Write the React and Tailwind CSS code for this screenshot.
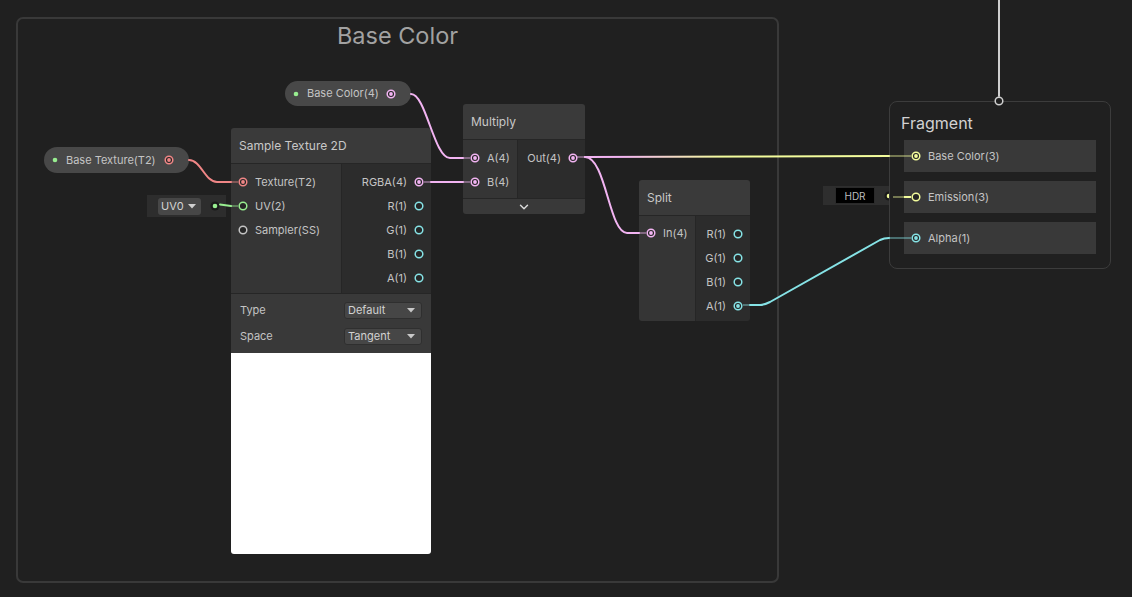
import { ChevronDown } from "lucide-react";

const C = {
  red: "#f08686",
  pink: "#f2b4f2",
  cyan: "#86e3e6",
  yellow: "#f3fc9c",
  green: "#98ee90",
  grey: "#c4c4c4",
};

const label = "font-['Inter','Noto_Sans',sans-serif] text-[11px] text-[#c4c4c4] leading-none whitespace-nowrap";

function Port({ color, filled }) {
  return (
    <svg width="10" height="10" viewBox="0 0 10 10" className="shrink-0">
      <circle cx="5" cy="5" r="3.8" fill="#262626" stroke={color} strokeWidth="1.5" />
      {filled && <circle cx="5" cy="5" r="1.9" fill={color} />}
    </svg>
  );
}

function Dot({ color, ring }) {
  return (
    <svg width="10" height="10" viewBox="0 0 10 10" className="shrink-0">
      {ring && <circle cx="5" cy="5" r="4.5" fill="#1a1a1a" />}
      <circle cx="5" cy="5" r="2.3" fill={color} />
    </svg>
  );
}

function InRow({ text, color, filled }) {
  return (
    <div className="flex h-6 items-center gap-[7px] pl-[7px]">
      <Port color={color} filled={filled} />
      <span className={label}>{text}</span>
    </div>
  );
}

function OutRow({ text, color, filled }) {
  return (
    <div className="flex h-6 items-center justify-end gap-[7px] pr-[7px]">
      <span className={label}>{text}</span>
      <Port color={color} filled={filled} />
    </div>
  );
}

function Header({ title }) {
  return (
    <div className="flex h-9 items-center border-b border-[#262626] bg-[#3a3a3a] px-2">
      <span className="font-['Inter','Noto_Sans',sans-serif] text-[12px] text-[#c8c8c8]">{title}</span>
    </div>
  );
}

function Select({ value }) {
  return (
    <div className="flex h-[17px] w-[78px] items-center justify-between rounded-[3px] border border-[#2f2f2f] bg-[#464646] pl-[3px] pr-[6px]">
      <span className={label + " text-[#d2d2d2]"}>{value}</span>
      <svg width="8" height="5" viewBox="0 0 8 5">
        <polygon points="0,0 8,0 4,4.5" fill="#c8c8c8" />
      </svg>
    </div>
  );
}

function Pill({ text, color, className }) {
  return (
    <div className={"absolute flex items-center rounded-full bg-[#484848] pl-[6px] pr-[15px] " + className}>
      <Dot color={C.green} />
      <span className={label + " ml-[6px] flex-1"}>{text}</span>
      <Port color={color} filled />
    </div>
  );
}

function Slot({ text, color, filled }) {
  return (
    <div className="flex h-8 items-center gap-[7px] bg-[#393939] pl-[7px]">
      <Port color={color} filled={filled} />
      <span className={label}>{text}</span>
    </div>
  );
}

export default function App() {
  return (
    <div className="relative h-[597px] w-[1132px] overflow-hidden bg-[#202020] font-['Inter','Noto_Sans',sans-serif]">
      {/* group */}
      <div className="absolute left-[16px] top-[17px] h-[566px] w-[763px] rounded-[7px] border-2 border-[#393939]">
        <div className="pt-[2px] text-center text-[23.5px] leading-[30px] text-[#a2a2a2]">Base Color</div>
      </div>

      {/* properties */}
      <Pill text="Base Texture(T2)" color={C.red} className="left-[44px] top-[147px] h-[26px] w-[145px]" />
      <Pill text="Base Color(4)" color={C.pink} className="left-[285px] top-[81px] h-[25px] w-[126px]" />

      {/* UV widget */}
      <div className="absolute left-[147px] top-[195px] flex h-[22px] w-[79px] items-center bg-[#2d2d2d] pl-[11px] pr-[6px]">
        <div className="flex h-[17px] w-[43px] items-center justify-between rounded-[3px] bg-[#474747] pl-[3px] pr-[5px]">
          <span className={label + " text-[#d4d4d4]"}>UV0</span>
          <svg width="8" height="5" viewBox="0 0 8 5">
            <polygon points="0,0 8,0 4,4.5" fill="#d0d0d0" />
          </svg>
        </div>
        <div className="ml-auto">
          <Dot color={C.green} ring />
        </div>
      </div>

      {/* Sample Texture 2D */}
      <div className="absolute left-[231px] top-[128px] w-[200px] overflow-hidden rounded-[3px]">
        <Header title="Sample Texture 2D" />
        <div className="flex">
          <div className="w-[111px] border-r border-[#262626] bg-[#353535] pt-[6px]">
            <InRow text="Texture(T2)" color={C.red} filled />
            <InRow text="UV(2)" color={C.green} />
            <InRow text="Sampler(SS)" color={C.grey} />
          </div>
          <div className="flex-1 bg-[#2c2c2c] pb-[3px] pt-[6px]">
            <OutRow text="RGBA(4)" color={C.pink} filled />
            <OutRow text="R(1)" color={C.cyan} />
            <OutRow text="G(1)" color={C.cyan} />
            <OutRow text="B(1)" color={C.cyan} />
            <OutRow text="A(1)" color={C.cyan} />
          </div>
        </div>
        <div className="flex flex-col gap-[9px] border-t border-[#262626] bg-[#393939] py-[8px] pl-[9px] pr-[9px]">
          <div className="flex items-center justify-between">
            <span className={label}>Type</span>
            <Select value="Default" />
          </div>
          <div className="flex items-center justify-between">
            <span className={label}>Space</span>
            <Select value="Tangent" />
          </div>
        </div>
        <div className="h-[201px] bg-white" />
      </div>

      {/* Multiply */}
      <div className="absolute left-[463px] top-[104px] w-[122px] overflow-hidden rounded-[3px]">
        <Header title="Multiply" />
        <div className="flex">
          <div className="w-[55px] border-r border-[#262626] bg-[#353535] pb-[4px] pt-[6px]">
            <InRow text="A(4)" color={C.pink} filled />
            <InRow text="B(4)" color={C.pink} filled />
          </div>
          <div className="flex-1 bg-[#2c2c2c] pt-[6px]">
            <OutRow text="Out(4)" color={C.pink} filled />
          </div>
        </div>
        <div className="flex h-4 items-center justify-center border-t border-[#262626] bg-[#393939]">
          <ChevronDown size={14} strokeWidth={2.5} color="#d8d8d8" />
        </div>
      </div>

      {/* Split */}
      <div className="absolute left-[639px] top-[180px] w-[111px] overflow-hidden rounded-[3px]">
        <Header title="Split" />
        <div className="flex">
          <div className="w-[57px] border-r border-[#262626] bg-[#353535] pt-[5px]">
            <InRow text="In(4)" color={C.pink} filled />
          </div>
          <div className="flex-1 bg-[#2c2c2c] pb-[3px] pt-[6px]">
            <OutRow text="R(1)" color={C.cyan} />
            <OutRow text="G(1)" color={C.cyan} />
            <OutRow text="B(1)" color={C.cyan} />
            <OutRow text="A(1)" color={C.cyan} filled />
          </div>
        </div>
      </div>

      {/* HDR widget */}
      <div className="absolute left-[823px] top-[186px] flex h-[19px] w-[77px] items-center bg-[#2e2e2e] pl-[12px] pr-[6px]">
        <div className="flex h-[17px] w-[40px] items-center justify-center border border-[#2a2a2a] bg-black">
          <span className="text-[10px] leading-none text-[#bdbdbd]">HDR</span>
        </div>
        <div className="ml-auto">
          <Dot color={C.yellow} ring />
        </div>
      </div>

      {/* Fragment */}
      <div className="absolute left-[889px] top-[101px] flex h-[168px] w-[222px] flex-col rounded-[8px] border border-[#3c3c3c] bg-[#202020] px-[14px]">
        <div className="-ml-[3px] pt-[10px] text-[16px] leading-[22px] text-[#d2d2d2]">Fragment</div>
        <div className="mt-[6px] flex flex-col gap-[9px]">
          <Slot text="Base Color(3)" color={C.yellow} filled />
          <Slot text="Emission(3)" color={C.yellow} />
          <Slot text="Alpha(1)" color={C.cyan} filled />
        </div>
      </div>

      {/* edges */}
      <svg className="pointer-events-none absolute inset-0" width="1132" height="597" viewBox="0 0 1132 597">
        <defs>
          <linearGradient id="py" gradientUnits="userSpaceOnUse" x1="585" y1="0" x2="889" y2="0">
            <stop offset="0" stopColor={C.pink} />
            <stop offset="0.12" stopColor={C.pink} />
            <stop offset="0.45" stopColor={C.yellow} />
            <stop offset="1" stopColor={C.yellow} />
          </linearGradient>
        </defs>
        <g fill="none" strokeWidth="2" strokeLinecap="round" strokeLinejoin="round">
          <path d="M189,160 C201,160 205,182 217,182 H231" stroke={C.red} />
          <path d="M220,204.5 L231,206" stroke={C.green} />
          <path d="M431,182 H463" stroke={C.pink} />
          <path d="M411,94 C426,94 434,158 450,158 H463" stroke={C.pink} />
          <path d="M585,157 C700,157 780,156 889,156" stroke="url(#py)" />
          <path d="M585,157 C606,157 609,233 627,233 H639" stroke={C.pink} />
          <path d="M750,305 H760 C764,305 766,304 770,302 L880,240 C883,238.5 885,238 889,238" stroke={C.cyan} />
          <path d="M999,0 V96" stroke="#cfcfcf" />
        </g>
        <circle cx="999" cy="101" r="3.8" fill="#202020" stroke="#cfcfcf" strokeWidth="1.5" />
        {/* port stubs */}
        <g fill="none" strokeWidth="2" opacity="0.4">
          <path d="M231,182 H238" stroke={C.red} />
          <path d="M231,206 H238" stroke={C.green} />
          <path d="M424,182 H431" stroke={C.pink} />
          <path d="M463,158 H470" stroke={C.pink} />
          <path d="M463,182 H470" stroke={C.pink} />
          <path d="M577,157 H585" stroke={C.pink} />
          <path d="M639,233 H646" stroke={C.pink} />
          <path d="M743,305 H750" stroke={C.cyan} />
          <path d="M889,156 H911" stroke={C.yellow} />
          <path d="M889,238 H911" stroke={C.cyan} />
          <path d="M893,197 H904" stroke={C.yellow} />
        </g>
        <path d="M904,197 H911" stroke={C.yellow} strokeWidth="2" />
      </svg>
    </div>
  );
}
